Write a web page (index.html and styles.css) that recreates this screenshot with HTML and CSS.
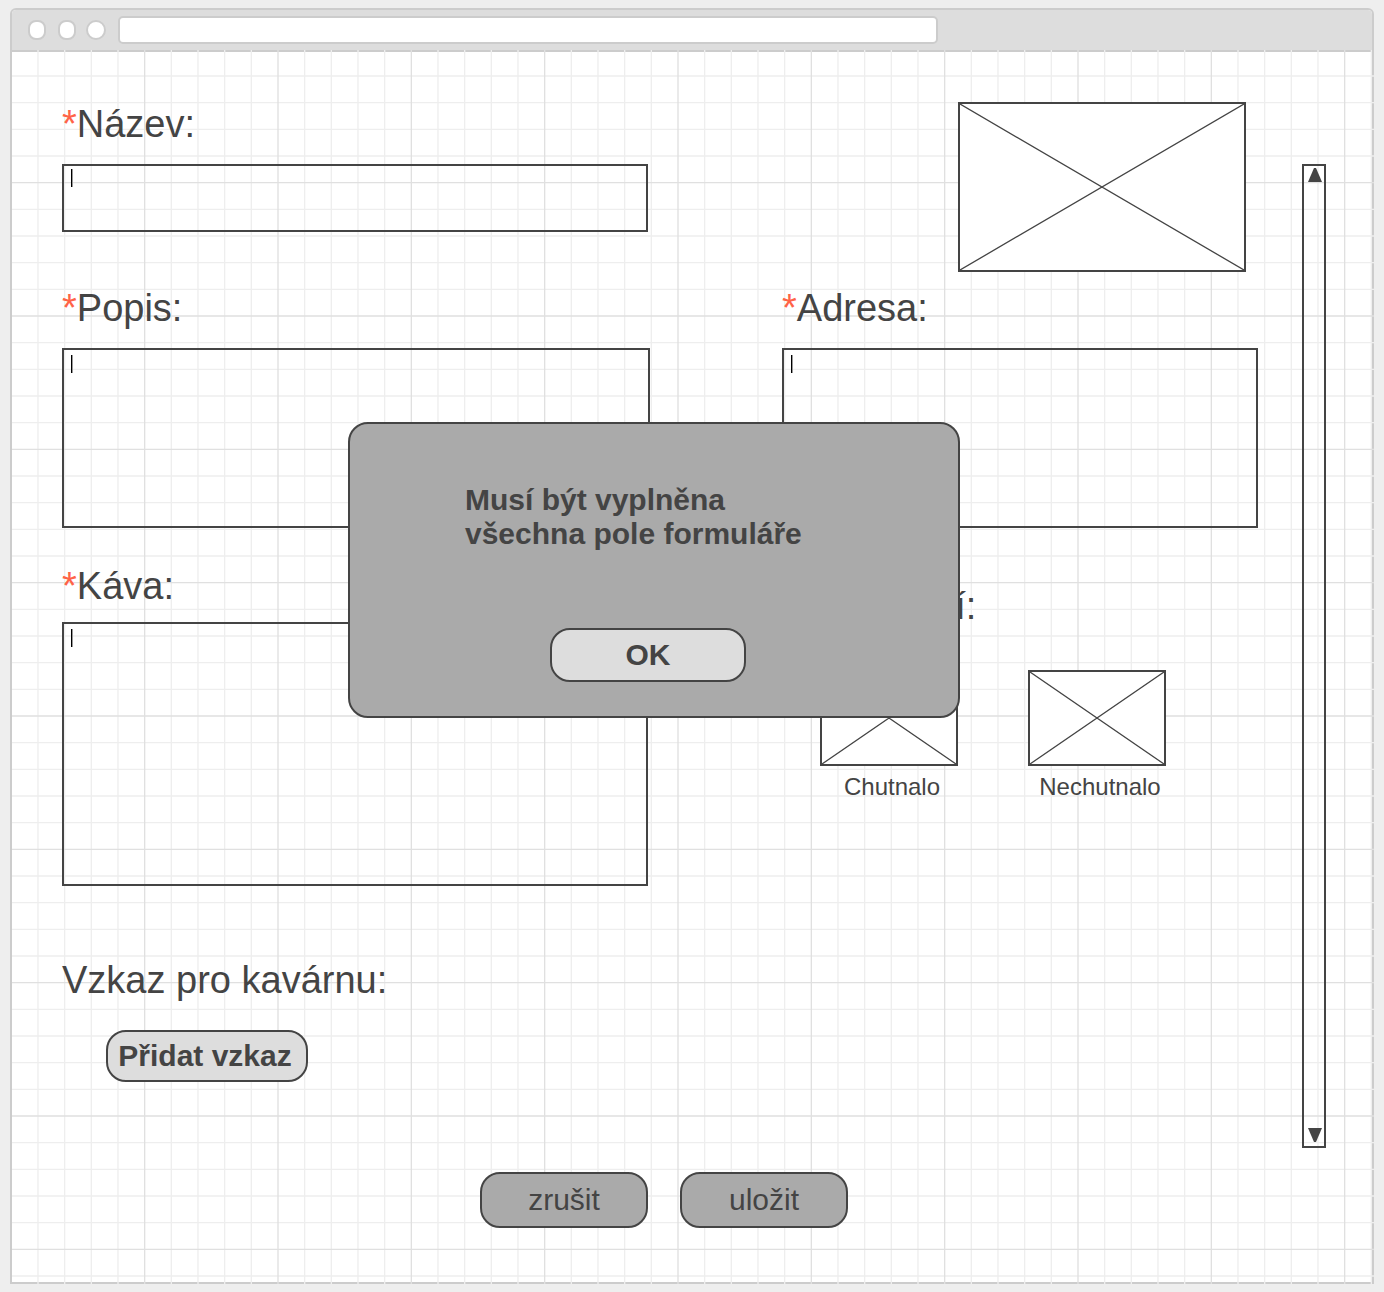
FILE: index.html
```html
<!DOCTYPE html>
<html lang="cs">
<head>
<meta charset="utf-8">
<meta name="viewport" content="width=device-width, initial-scale=1">
<title>Hodnocení kavárny</title>
<link rel="stylesheet" href="styles.css">
</head>
<body>
<div class="browser">
  <header class="toolbar">
    <span class="dot"></span>
    <span class="dot"></span>
    <span class="dot dot-wide"></span>
    <input class="address-bar" type="text" aria-label="URL">
  </header>

  <main class="page">
    <svg class="grid-lines" width="100%" height="100%" aria-hidden="true">
      <defs>
        <pattern id="grid" width="400" height="400" patternUnits="userSpaceOnUse" viewBox="0 0 1200 1200">
          <path class="line-minor" d="M78 0V1200M158 0V1200M238 0V1200M318 0V1200M478 0V1200M558 0V1200M638 0V1200M718 0V1200M878 0V1200M958 0V1200M1038 0V1200M1118 0V1200M0 78H1200M0 158H1200M0 238H1200M0 318H1200M0 478H1200M0 558H1200M0 638H1200M0 718H1200M0 878H1200M0 958H1200M0 1038H1200M0 1118H1200"/>
          <path class="line-major" d="M398 0V1200M798 0V1200M1198 0V1200M0 398H1200M0 798H1200M0 1198H1200"/>
        </pattern>
      </defs>
      <rect width="100%" height="100%" fill="url(#grid)"/>
    </svg>

    <form class="review">
      <div class="column">
        <label class="label" for="nazev"><span class="required">*</span>Název:</label>
        <textarea class="field field-name" id="nazev"></textarea>
        <label class="label label-popis" for="popis"><span class="required">*</span>Popis:</label>
        <textarea class="field field-text" id="popis"></textarea>
        <label class="label label-kava" for="kava"><span class="required">*</span>Káva:</label>
        <textarea class="field field-coffee" id="kava"></textarea>
        <h2 class="label label-vzkaz">Vzkaz pro kavárnu:</h2>
        <button class="button button-light button-message" type="button">Přidat vzkaz</button>
      </div>

      <div class="column">
        <svg class="placeholder placeholder-photo" viewBox="0 0 284 166" preserveAspectRatio="none" role="img" aria-label="Obrázek"><path d="M0 0L284 166M284 0L0 166"/></svg>
        <label class="label label-adresa" for="adresa"><span class="required">*</span>Adresa:</label>
        <textarea class="field field-text" id="adresa"></textarea>
        <h2 class="label label-hodnoceni">Hodnocení:</h2>
        <div class="ratings">
          <figure class="rating">
            <svg class="placeholder placeholder-rating" viewBox="0 0 134 92" preserveAspectRatio="none" aria-hidden="true"><path d="M0 0L134 92M134 0L0 92"/></svg>
            <figcaption class="caption">Chutnalo</figcaption>
          </figure>
          <figure class="rating">
            <svg class="placeholder placeholder-rating" viewBox="0 0 134 92" preserveAspectRatio="none" aria-hidden="true"><path d="M0 0L134 92M134 0L0 92"/></svg>
            <figcaption class="caption">Nechutnalo</figcaption>
          </figure>
        </div>
      </div>

      <div class="actions">
        <button class="button button-dark" type="button">zrušit</button>
        <button class="button button-dark" type="submit">uložit</button>
      </div>
    </form>

    <div class="scrollbar">
      <button class="scroll-button" type="button" aria-label="Nahoru"><svg width="14" height="14" viewBox="0 0 14 14"><path d="M6 0H8L14 14H0Z"/></svg></button>
      <button class="scroll-button" type="button" aria-label="Dolů"><svg width="14" height="14" viewBox="0 0 14 14"><path d="M0 0H14L8 14H6Z"/></svg></button>
    </div>

    <div class="dialog" role="alertdialog" aria-labelledby="dialog-text">
      <p class="dialog-text" id="dialog-text">Musí být vyplněna<br>všechna pole formuláře</p>
      <button class="button button-light button-ok" type="button">OK</button>
    </div>
  </main>
</div>
</body>
</html>
```

FILE: styles.css
```css
* {
  box-sizing: border-box;
}

body {
  margin: 0;
  padding: 8px 10px;
  min-height: 100vh;
  display: flex;
  background: #eee;
  color: #444;
  font-family: "Liberation Sans", Arial, sans-serif;
}

.browser {
  flex: 1;
  min-width: 0;
  display: flex;
  flex-direction: column;
  border: 2px solid #ccc;
  border-radius: 6px 6px 0 0;
  background: #fff;
}

.toolbar {
  display: flex;
  align-items: center;
  padding: 6px 16px;
  border-bottom: 2px solid #ccc;
  border-radius: 4px 4px 0 0;
  background: #ddd;
}

.dot {
  width: 18px;
  height: 20px;
  margin-right: 12px;
  border: 2px solid #ccc;
  border-radius: 8px;
  background: #fff;
}

.dot:nth-child(2) {
  margin-right: 10px;
}

.dot-wide {
  width: 20px;
  border-radius: 10px;
}

.address-bar {
  flex: 0 1 820px;
  min-width: 0;
  height: 28px;
  padding: 0 8px;
  border: 2px solid #ccc;
  border-radius: 5px;
  background: #fff;
  font: 16px "Liberation Sans", Arial, sans-serif;
}

.page {
  flex: 1;
  position: relative;
  display: flex;
  align-items: flex-start;
  gap: 44px;
  padding: 50px 46px 54px 50px;
}

/* The lines run over the frame's borders */
.grid-lines {
  position: absolute;
  top: -2px;
  left: 0;
  width: calc(100% + 2px);
  height: calc(100% + 4px);
}

.line-minor,
.line-major {
  fill: none;
  stroke: #eee;
  stroke-width: 4;
}

.line-major {
  stroke: #e0e0e0;
}

.review {
  flex: 1;
  min-width: 0;
  position: relative;
  display: grid;
  grid-template-columns: 588fr 476fr;
  column-gap: 132px;
}

.column {
  display: flex;
  flex-direction: column;
  align-items: stretch;
  min-width: 0;
}

.label {
  margin: 0 0 18px;
  font-size: 38px;
  font-weight: 400;
  line-height: 44px;
}

.required {
  color: #ff6347;
}

.label-popis {
  margin-top: 54px;
}

.label-kava {
  margin-top: 36px;
  margin-bottom: 14px;
}

.label-vzkaz {
  margin-top: 72px;
  margin-bottom: 28px;
}

.label-adresa {
  margin-top: 14px;
}

.label-hodnoceni {
  margin-top: 56px;
  margin-bottom: 42px;
}

/* An idle text caret is drawn in the field's top left corner */
.field {
  display: block;
  margin: 0;
  padding: 4px 8px;
  border: 2px solid #444;
  border-radius: 0;
  outline: none;
  resize: none;
  background: linear-gradient(90deg, #000 1px, #999 1px) 7px 5px / 2px 18px no-repeat;
  color: #444;
  font: 16px "Liberation Sans", Arial, sans-serif;
}

.field-name {
  height: 68px;
  margin-right: 2px;
  background-position: 7px 3px;
}

.field-text {
  height: 180px;
}

.field-coffee {
  height: 264px;
  margin-right: 2px;
}

.placeholder {
  display: block;
  border: 2px solid #444;
  background: #fff;
  fill: none;
  stroke: #444;
  stroke-width: 1.3;
}

.placeholder-photo {
  align-self: flex-end;
  width: 288px;
  max-width: 100%;
  height: 170px;
  margin-right: 12px;
}

.placeholder-rating {
  width: 138px;
  height: 96px;
}

.ratings {
  display: flex;
  gap: 70px;
  padding-left: 38px;
}

.rating {
  margin: 0;
}

.caption {
  margin-top: 7px;
  padding-left: 6px;
  font-size: 24px;
  line-height: 28px;
  text-align: center;
}

.button {
  padding: 0;
  border: 2px solid #444;
  border-radius: 20px;
  color: #444;
  font: 30px/34px "Liberation Sans", Arial, sans-serif;
  cursor: pointer;
}

.button-light {
  background: #ddd;
  font-weight: 700;
}

.button-dark {
  width: 168px;
  height: 56px;
  background: #aaa;
}

.button-message {
  width: 202px;
  height: 52px;
  margin-left: 44px;
  padding-right: 4px;
}

.actions {
  grid-column: 1 / -1;
  display: flex;
  justify-content: center;
  gap: 32px;
  margin-top: 90px;
  padding-left: 8px;
}

.scrollbar {
  position: relative;
  align-self: stretch;
  display: flex;
  flex-direction: column;
  justify-content: space-between;
  width: 24px;
  margin: 62px 0 80px;
  padding: 2px 2px 4px 4px;
  border: 2px solid #444;
}

.scroll-button {
  width: 14px;
  height: 14px;
  padding: 0;
  border: 0;
  background: none;
  fill: #444;
  cursor: pointer;
}

.scroll-button svg {
  display: block;
}

.dialog {
  position: absolute;
  top: 370px;
  left: 336px;
  width: 612px;
  padding: 59px 115px 34px;
  border: 2px solid #444;
  border-radius: 20px;
  background: #aaa;
}

.dialog-text {
  margin: 0 0 77px;
  font-size: 30px;
  font-weight: 700;
  line-height: 34px;
}

.button-ok {
  display: block;
  width: 196px;
  height: 54px;
  margin-left: 85px;
}
```
